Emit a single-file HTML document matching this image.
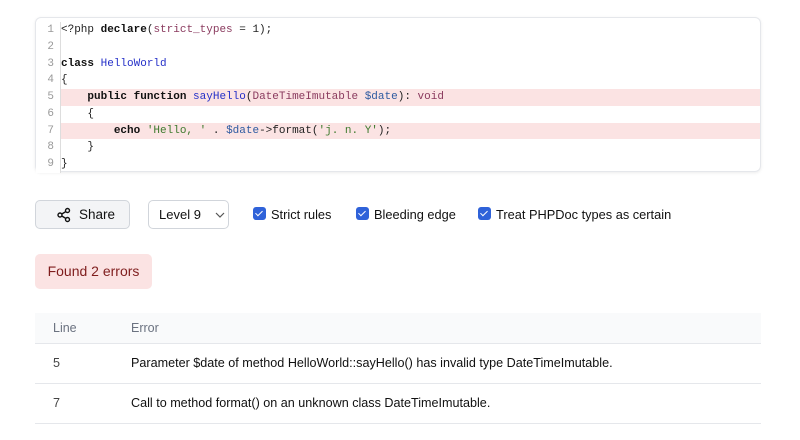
<!DOCTYPE html>
<html><head><style>
body{margin:0;width:800px;height:440px;background:#fff;font-family:"Liberation Sans",sans-serif;position:relative;overflow:hidden}
.code{position:absolute;left:35px;top:17px;width:726px;height:155px;border:1px solid #e5e7eb;border-radius:6px;box-shadow:0 1px 3px rgba(0,0,0,.08);padding-top:4px;box-sizing:border-box}
.ln{height:16.75px;line-height:16.75px;font-family:"Liberation Mono",monospace;font-size:11px;white-space:pre;display:flex;color:#222}
.ln .n{width:18px;text-align:right;color:#999;padding-right:6px;border-right:1px solid #ddd;flex:none;background:#fff}
.err{background:#fbe3e3}
b{font-weight:bold;color:#111}
.bl{color:#2530c8}.pu{color:#8a3a5e}.gr{color:#3e7a2e}.vr{color:#2e5aa0}
.btn{position:absolute;top:200px;height:29px;border:1px solid #d1d5db;border-radius:5px;box-sizing:border-box;font-size:13px;color:#111;display:flex;align-items:center}
.cb{position:absolute;top:207px;width:13px;height:13px;background:#2f62d9;border-radius:3px}
.cb:after{content:"";position:absolute;left:4px;top:2px;width:3px;height:6px;border:solid #fff;border-width:0 1.5px 1.5px 0;transform:rotate(45deg)}
.lbl{position:absolute;top:207px;font-size:12.8px;color:#111}
.found{position:absolute;left:35px;top:254px;width:117px;height:35px;background:#fbe3e3;border-radius:5px;color:#7f1d1d;font-size:14px;line-height:35px;text-align:center}
.th{position:absolute;left:35px;top:313px;width:726px;height:30px;background:#f9fafb;border-bottom:1px solid #e5e7eb;font-size:12.5px;color:#6b7280}
.row{position:absolute;left:35px;width:726px;height:40px;border-bottom:1px solid #e5e7eb;font-size:12.6px;color:#111}
.row span,.th span{position:absolute;line-height:inherit}
</style></head><body>
<div class="code">
<div class="ln"><span class="n">1</span><span class="c">&lt;?php <b>declare</b>(<span class="pu">strict_types</span> = 1);</span></div>
<div class="ln"><span class="n">2</span><span class="c"></span></div>
<div class="ln"><span class="n">3</span><span class="c"><b>class</b> <span class="bl">HelloWorld</span></span></div>
<div class="ln"><span class="n">4</span><span class="c">{</span></div>
<div class="ln err"><span class="n">5</span><span class="c">    <b>public</b> <b>function</b> <span class="bl">sayHello</span>(<span class="pu">DateTimeImutable</span> <span class="vr">$date</span>): <span class="pu">void</span></span></div>
<div class="ln"><span class="n">6</span><span class="c">    {</span></div>
<div class="ln err"><span class="n">7</span><span class="c">        <b>echo</b> <span class="gr">'Hello, '</span> . <span class="vr">$date</span>-&gt;format(<span class="gr">'j. n. Y'</span>);</span></div>
<div class="ln"><span class="n">8</span><span class="c">    }</span></div>
<div class="ln"><span class="n">9</span><span class="c">}</span></div>
</div>
<div class="btn" style="left:35px;width:95px;background:#f3f4f6;padding-left:20px;font-size:13.5px">
<svg width="16" height="16" viewBox="0 0 16 16" fill="none" stroke="#111" stroke-width="1.4" style="margin-right:7px"><circle cx="4" cy="8" r="2"/><circle cx="11.5" cy="3.5" r="2"/><circle cx="11.5" cy="12.5" r="2"/><path d="M5.8 7 9.8 4.6M5.8 9 9.8 11.4"/></svg>Share</div>
<div class="btn" style="left:148px;width:81px;padding-left:10px">Level 9
<svg width="10" height="6" viewBox="0 0 10 6" style="margin-left:14px" fill="none" stroke="#555" stroke-width="1.2"><path d="M1 1l4 4 4-4"/></svg></div>
<div class="cb" style="left:253px"></div><div class="lbl" style="left:271px">Strict rules</div>
<div class="cb" style="left:356px"></div><div class="lbl" style="left:374px">Bleeding edge</div>
<div class="cb" style="left:478px"></div><div class="lbl" style="left:496px">Treat PHPDoc types as certain</div>
<div class="found">Found 2 errors</div>
<div class="th" style="line-height:30px"><span style="left:18px">Line</span><span style="left:96px">Error</span></div>
<div class="row" style="top:343px;line-height:40px"><span style="left:18px;color:#444">5</span><span style="left:96px">Parameter $date of method HelloWorld::sayHello() has invalid type DateTimeImutable.</span></div>
<div class="row" style="top:383px;line-height:40px"><span style="left:18px;color:#444">7</span><span style="left:96px">Call to method format() on an unknown class DateTimeImutable.</span></div>
</body></html>
